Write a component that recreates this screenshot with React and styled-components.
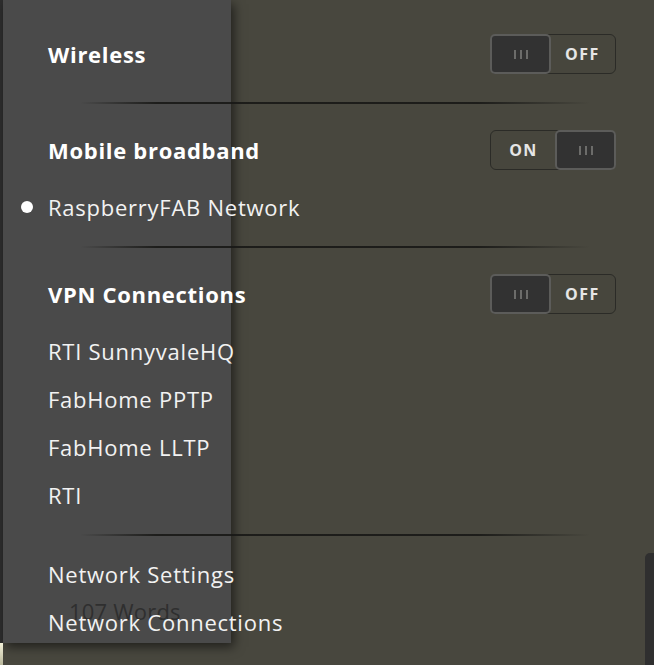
import React from 'react';
import styled, { createGlobalStyle } from 'styled-components';

const GlobalStyle = createGlobalStyle`
  html, body {
    margin: 0;
    padding: 0;
    background: #48473e;
    overflow: hidden;
  }
  * { box-sizing: border-box; }
`;

const Screen = styled.div`
  position: relative;
  width: 654px;
  height: 665px;
  overflow: hidden;
  background: #48473e;
  font-family: "Open Sans", "Noto Sans", sans-serif;
  color: #f4f4f4;

  &::before {
    content: "";
    position: absolute;
    left: 0;
    top: 0;
    width: 3px;
    height: 643px;
    background: #2e2e2e;
  }
  &::after {
    content: "";
    position: absolute;
    left: 0;
    top: 643px;
    width: 3px;
    height: 22px;
    background: linear-gradient(#f2f0d8, #b9b79c);
  }
`;

const EditorWindow = styled.div`
  position: absolute;
  left: 3px;
  top: 0;
  width: 228px;
  height: 643px;
  background: #4a4a4a;
  box-shadow: 3px 4px 10px rgba(0, 0, 0, 0.55);
  display: flex;
  flex-direction: column;
  justify-content: flex-end;
`;

const WordCount = styled.div`
  padding: 0 0 17px 66px;
  font-size: 22px;
  letter-spacing: 0.2px;
  color: #2f2f2f;
`;

const Scrollbar = styled.div`
  position: absolute;
  right: 0;
  top: 553px;
  width: 9px;
  height: 112px;
  background: #2f2f2f;
  border-top-left-radius: 5px;
`;

const Menu = styled.div`
  position: relative;
  z-index: 1;
  padding: 22px 38px 0 0;
  display: flex;
  flex-direction: column;
`;

const Header = styled.div`
  display: flex;
  align-items: center;
  justify-content: space-between;
  height: 48px;
  margin: 8px 0 9px;
  padding-left: 48px;
  font-size: 22px;
  font-weight: 700;
  letter-spacing: 0.7px;
  color: #ffffff;
`;

const Item = styled.div`
  display: flex;
  align-items: center;
  height: 48px;
  font-size: 22px;
  letter-spacing: 0.75px;
  color: #f2f2f2;
`;

const Gutter = styled.span`
  width: 48px;
  display: flex;
  align-items: center;
  padding-left: 21px;
`;

const Dot = styled.span`
  width: 12px;
  height: 12px;
  border-radius: 50%;
  background: #ffffff;
`;

const Separator = styled.div`
  height: 2px;
  margin: 15px 26px 14px 80px;
  background: linear-gradient(90deg, rgba(24, 24, 22, 0) 0%, rgba(24, 24, 22, 0.9) 15%, rgba(24, 24, 22, 0.9) 78%, rgba(24, 24, 22, 0) 100%);
`;

const Switch = styled.div`
  display: flex;
  flex-direction: ${p => (p.$on ? 'row' : 'row-reverse')};
  width: 126px;
  height: 40px;
  border: 1px solid #2b2b27;
  border-radius: 6px;
  background: #47463d;
`;

const SwitchLabel = styled.span`
  flex: 1;
  display: flex;
  align-items: center;
  justify-content: center;
  font-size: 16px;
  font-weight: 700;
  letter-spacing: 1.5px;
  color: #e6e6e6;
`;

const Knob = styled.span`
  width: 61px;
  margin: -1px;
  border: 2px solid #5c5c5a;
  border-radius: 5px;
  background: #323232;
  display: flex;
  align-items: center;
  justify-content: center;
  gap: 4px;
`;

const Grip = styled.span`
  width: 2px;
  height: 9px;
  background: #6c6c6a;
`;

function Toggle({ on }) {
  return (
    <Switch $on={on}>
      <SwitchLabel>{on ? 'ON' : 'OFF'}</SwitchLabel>
      <Knob>
        <Grip />
        <Grip />
        <Grip />
      </Knob>
    </Switch>
  );
}

function Entry({ label, active }) {
  return (
    <Item>
      <Gutter>{active && <Dot />}</Gutter>
      {label}
    </Item>
  );
}

export default function App() {
  return (
    <Screen>
      <GlobalStyle />
      <EditorWindow>
        <WordCount>107 Words</WordCount>
      </EditorWindow>
      <Scrollbar />
      <Menu>
        <Header>
          Wireless
          <Toggle on={false} />
        </Header>
        <Separator />
        <Header>
          Mobile broadband
          <Toggle on />
        </Header>
        <Entry label="RaspberryFAB Network" active />
        <Separator />
        <Header>
          VPN Connections
          <Toggle on={false} />
        </Header>
        <Entry label="RTI SunnyvaleHQ" />
        <Entry label="FabHome PPTP" />
        <Entry label="FabHome LLTP" />
        <Entry label="RTI" />
        <Separator />
        <Entry label="Network Settings" />
        <Entry label="Network Connections" />
      </Menu>
    </Screen>
  );
}
